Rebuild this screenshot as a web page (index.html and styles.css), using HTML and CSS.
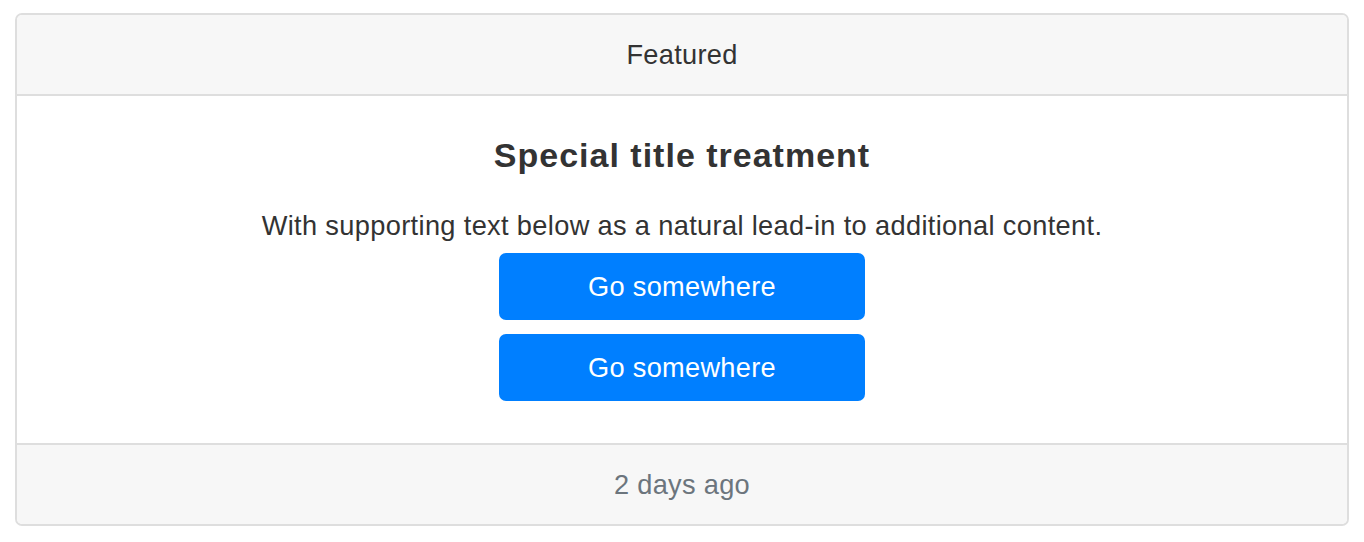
FILE: index.html
```html
<!DOCTYPE html>
<html>
<head>
<meta charset="utf-8">
<link rel="stylesheet" href="styles.css">
</head>
<body>
<div class="card">
  <div class="card-header">Featured</div>
  <div class="card-body">
    <h5 class="card-title">Special title treatment</h5>
    <p class="card-text">With supporting text below as a natural lead-in to additional content.</p>
    <a class="btn" href="#">Go somewhere</a>
    <a class="btn" href="#">Go somewhere</a>
  </div>
  <div class="card-footer">2 days ago</div>
</div>
</body>
</html>
```

FILE: styles.css
```css
html, body {
  background: #fff;
}
body {
  margin: 13px 15px;
  font-family: "Liberation Sans", Arial, sans-serif;
  font-size: 27.2px;
  letter-spacing: 0.3px;
  color: #333;
}
.card {
  border: 2px solid #dedede;
  border-radius: 7px;
  overflow: hidden;
  display: flex;
  flex-direction: column;
}
.card-header,
.card-footer {
  background: #f7f7f7;
  height: 79px;
  line-height: 79px;
  text-align: center;
}
.card-header {
  border-bottom: 2px solid #dedede;
}
.card-footer {
  border-top: 2px solid #dedede;
  color: #6c757d;
}
.card-body {
  display: flex;
  flex-direction: column;
  align-items: center;
  padding: 39px 0 42px;
}
.card-title {
  margin: 0;
  font-size: 34px;
  font-weight: bold;
  line-height: 41px;
  letter-spacing: 1px;
  color: #333;
}
.card-text {
  margin: 29px 0 7px;
  line-height: 41px;
  letter-spacing: 0.35px;
}
.btn {
  display: block;
  box-sizing: border-box;
  width: 366px;
  height: 67px;
  line-height: 67px;
  text-align: center;
  background: #007fff;
  color: #fff;
  border-radius: 7px;
  text-decoration: none;
}
.btn + .btn {
  margin-top: 14px;
}
```
